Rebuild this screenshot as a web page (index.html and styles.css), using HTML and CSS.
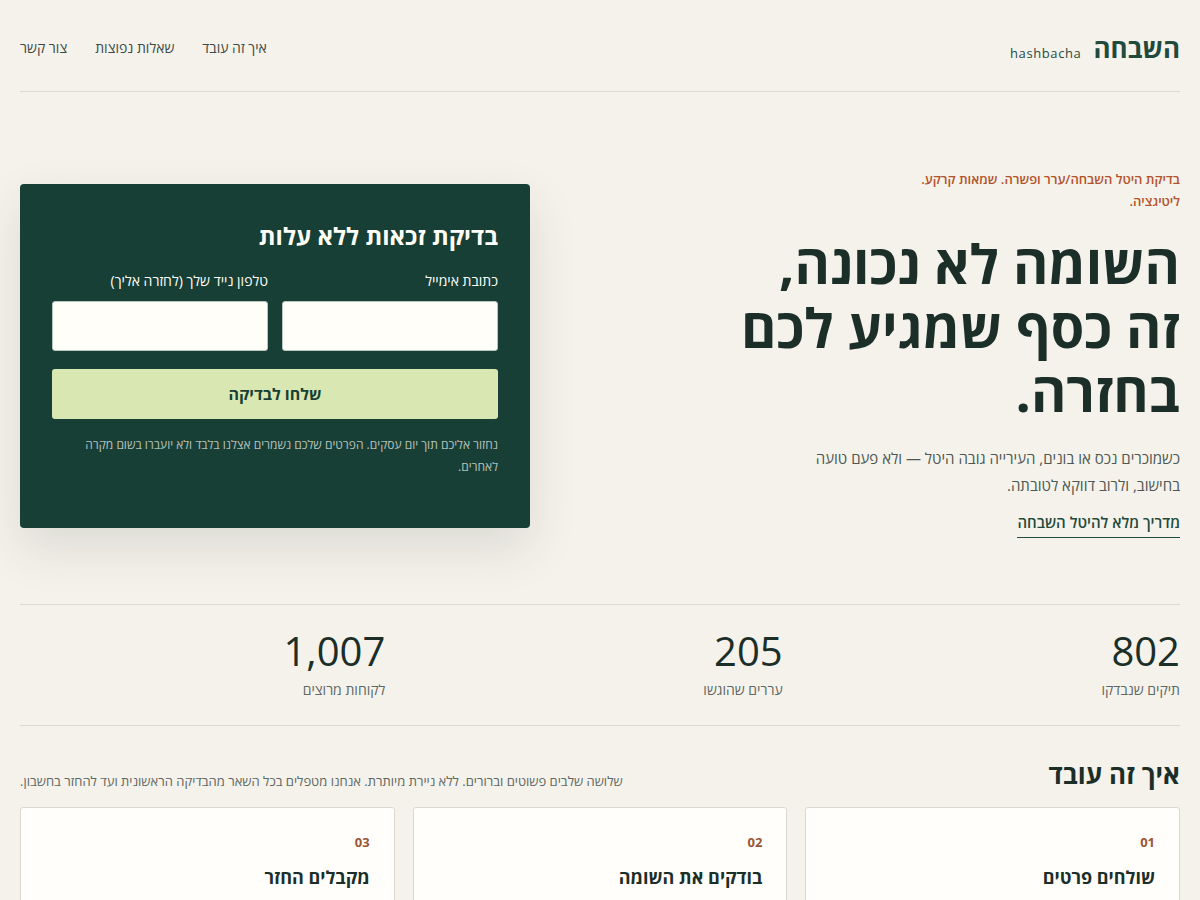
FILE: index.html
```html
<!DOCTYPE html>
<html lang="he" dir="rtl">
<head>
    <meta charset="UTF-8">
    <meta name="viewport" content="width=device-width, initial-scale=1.0">
    <title>השבחה — בדיקת היטל השבחה</title>
    <link rel="stylesheet" href="styles.css">
</head>
<body>
    <div class="page">
        <header class="site-header">
            <a class="logo" href="#">
                <span class="logo-he">השבחה</span>
                <span class="logo-en">hashbacha</span>
            </a>
            <nav class="nav">
                <a href="#">איך זה עובד</a>
                <a href="#">שאלות נפוצות</a>
                <a href="#">צור קשר</a>
            </nav>
        </header>

        <section class="hero">
            <div class="hero-text">
                <p class="eyebrow">בדיקת היטל השבחה/ערר ופשרה. שמאות קרקע. ליטיגציה.</p>
                <h1>השומה לא נכונה,<br>זה כסף שמגיע לכם<br>בחזרה.</h1>
                <p class="lead">כשמוכרים נכס או בונים, העירייה גובה היטל — ולא פעם טועה בחישוב, ולרוב דווקא לטובתה.</p>
                <a class="hero-link" href="#">מדריך מלא להיטל השבחה</a>
            </div>

            <div class="form-card">
                <h2>בדיקת זכאות ללא עלות</h2>
                <form class="check-form">
                    <div class="field-row">
                        <label class="field">
                            <span>כתובת אימייל</span>
                            <input type="email">
                        </label>
                        <label class="field">
                            <span>טלפון נייד שלך (לחזרה אליך)</span>
                            <input type="tel">
                        </label>
                    </div>
                    <button type="submit">שלחו לבדיקה</button>
                </form>
                <p class="form-note">נחזור אליכם תוך יום עסקים. הפרטים שלכם נשמרים אצלנו בלבד ולא יועברו בשום מקרה לאחרים.</p>
            </div>
        </section>

        <section class="stats">
            <div class="stat">
                <div class="stat-num">802</div>
                <div class="stat-label">תיקים שנבדקו</div>
            </div>
            <div class="stat">
                <div class="stat-num">205</div>
                <div class="stat-label">עררים שהוגשו</div>
            </div>
            <div class="stat">
                <div class="stat-num">1,007</div>
                <div class="stat-label">לקוחות מרוצים</div>
            </div>
        </section>

        <section class="steps">
            <div class="steps-head">
                <h3>איך זה עובד</h3>
                <p>שלושה שלבים פשוטים וברורים. ללא ניירת מיותרת. אנחנו מטפלים בכל השאר מהבדיקה הראשונית ועד להחזר בחשבון.</p>
            </div>
            <div class="step-grid">
                <div class="step-card">
                    <span class="step-num">01</span>
                    <h4>שולחים פרטים</h4>
                    <p>ממלאים טופס קצר ומצרפים את שומת ההיטל</p>
                </div>
                <div class="step-card">
                    <span class="step-num">02</span>
                    <h4>בודקים את השומה</h4>
                    <p>השמאי בודק את החישוב מול התכניות החלות</p>
                </div>
                <div class="step-card">
                    <span class="step-num">03</span>
                    <h4>מקבלים החזר</h4>
                    <p>מגישים ערר ומלווים אתכם עד קבלת הכסף</p>
                </div>
            </div>
        </section>
    </div>
</body>
</html>
```

FILE: styles.css
```css
* {
    box-sizing: border-box;
}
body {
    margin: 0;
    background-color: #f5f2ec;
    color: #1b2e28;
    font-family: "Open Sans", "DejaVu Sans", sans-serif;
}
a {
    color: inherit;
    text-decoration: none;
}
.page {
    max-width: 1200px;
    margin: 0 auto;
    padding: 0 20px;
}

/* header */
.site-header {
    display: flex;
    justify-content: space-between;
    align-items: center;
    height: 92px;
    padding-top: 4px;
    border-bottom: 1px solid #dedad2;
}
.logo {
    display: flex;
    align-items: baseline;
    gap: 12px;
    color: #2a4a3e;
}
.logo-he {
    font-size: 26px;
    font-weight: 700;
    color: #1f4a3c;
}
.logo-en {
    font-size: 13px;
    letter-spacing: 0.6px;
}
.nav {
    display: flex;
    gap: 28px;
    font-size: 14px;
    color: #3c4a45;
}

/* hero */
.hero {
    display: grid;
    grid-template-columns: minmax(0, 1fr) 510px;
    gap: 48px;
    align-items: center;
    padding: 76px 0 60px;
}
.hero-text {
    padding-bottom: 6px;
}
.eyebrow {
    margin: 0 0 19px;
    max-width: 275px;
    font-size: 13px;
    line-height: 22px;
    font-weight: 600;
    color: #b4532a;
}
.hero h1 {
    margin: 0 0 22px;
    font-size: 54px;
    line-height: 64px;
    font-weight: 700;
    color: #1b2e28;
}
.lead {
    margin: 0 0 12px;
    max-width: 380px;
    font-size: 15px;
    line-height: 27px;
    color: #4d5853;
}
.hero-link {
    display: inline-block;
    padding-bottom: 5px;
    border-bottom: 1px solid #1f4a3c;
    font-size: 15px;
    line-height: 20px;
    font-weight: 600;
    color: #1f4a3c;
}

/* form card */
.form-card {
    background-color: #173f35;
    color: #fffef8;
    border-radius: 4px;
    padding: 36px 32px 50px;
    box-shadow: 0 20px 50px rgba(40, 50, 30, 0.12);
}
.form-card h2 {
    margin: 0 0 19px;
    font-size: 24px;
    line-height: 32px;
    font-weight: 700;
}
.field-row {
    display: grid;
    grid-template-columns: 1fr 1fr;
    gap: 14px;
}
.field span {
    display: block;
    margin-bottom: 10px;
    font-size: 14px;
    line-height: 20px;
}
.field input {
    display: block;
    width: 100%;
    height: 50px;
    border: 1px solid #b9c6bf;
    border-radius: 3px;
    background-color: #fffef8;
}
.check-form button {
    display: block;
    width: 100%;
    height: 50px;
    margin-top: 18px;
    border: none;
    border-radius: 3px;
    background-color: #d9e8b2;
    color: #173f35;
    font-family: inherit;
    font-size: 16px;
    font-weight: 700;
}
.form-note {
    margin: 15px 0 0;
    font-size: 12px;
    line-height: 22px;
    color: rgba(255, 254, 248, 0.7);
}

/* stats */
.stats {
    display: grid;
    grid-template-columns: repeat(3, 1fr);
    gap: 32px;
    padding: 22px 0 25px;
    border-top: 1px solid #dedad2;
    border-bottom: 1px solid #dedad2;
}
.stat-num {
    font-size: 40px;
    line-height: 48px;
    font-weight: 500;
    color: #1b2e28;
}
.stat-label {
    margin-top: 4px;
    font-size: 14px;
    line-height: 21px;
    color: #5d6863;
}

/* steps */
.steps {
    padding: 31px 0 60px;
}
.steps-head {
    display: flex;
    justify-content: space-between;
    align-items: flex-end;
    gap: 40px;
    margin-bottom: 16px;
}
.steps-head h3 {
    margin: 0;
    font-size: 26px;
    line-height: 34px;
    font-weight: 700;
    color: #1b2e28;
}
.steps-head p {
    margin: 0;
    font-size: 13px;
    line-height: 20px;
    color: #5d6863;
}
.step-grid {
    display: grid;
    grid-template-columns: repeat(3, 1fr);
    gap: 18px;
}
.step-card {
    background-color: #fffefa;
    border: 1px solid #dcd8cf;
    border-radius: 3px;
    padding: 25px 24px 30px;
    min-height: 200px;
}
.step-num {
    display: block;
    font-size: 13px;
    line-height: 18px;
    font-weight: 700;
    color: #9b5535;
}
.step-card h4 {
    margin: 14px 0 8px;
    font-size: 18px;
}
.step-card p {
    margin: 0;
    font-size: 14px;
    line-height: 22px;
    color: #5d6863;
}
```
